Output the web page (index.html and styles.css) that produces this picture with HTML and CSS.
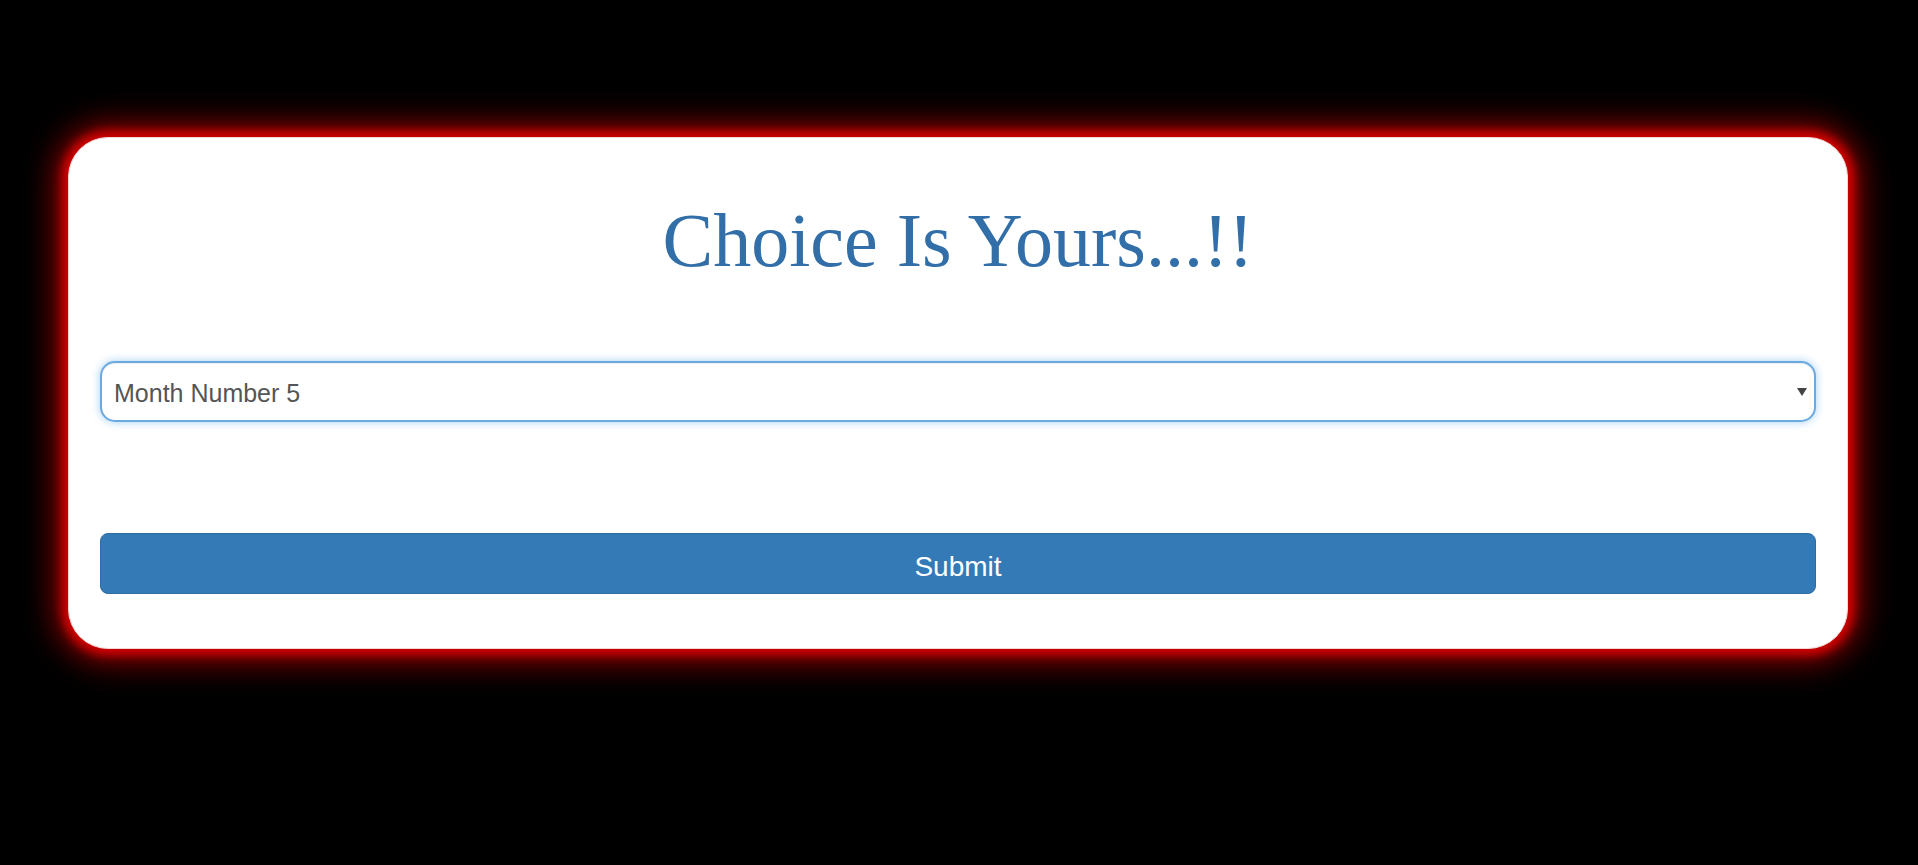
FILE: index.html
```html
<!DOCTYPE html>
<html lang="en">
<head>
<meta charset="utf-8">
<title>Choice Is Yours</title>
<link rel="stylesheet" href="styles.css">
</head>
<body>
<div class="card">
  <h1 class="title">Choice Is Yours...!!</h1>
  <div class="select-wrap">
    <select class="month-select">
      <option>Month Number 5</option>
    </select>
    <svg class="arrow" width="10" height="8" viewBox="0 0 10 8"><path d="M0 0 H10 L5 8 Z" fill="#444"/></svg>
  </div>
  <button class="submit-btn" type="button">Submit</button>
</div>
</body>
</html>
```
FILE: styles.css
```css
html, body {
  margin: 0;
  padding: 0;
  background: #000;
  height: 100%;
}
body {
  padding-top: 137px;
  box-sizing: border-box;
}
.card {
  box-sizing: border-box;
  width: 1780px;
  height: 512px;
  margin-left: 68px;
  padding: 61px 31px 0 31px;
  background: #fff;
  border: 1px solid #f2d4d4;
  border-radius: 40px;
  box-shadow: 0 0 10px 6px #d00000, 0 0 32px 12px rgba(200, 0, 0, 0.75);
  display: flex;
  flex-direction: column;
}
.title {
  margin: 0;
  font-family: "Liberation Serif", "Times New Roman", serif;
  font-weight: normal;
  font-size: 76px;
  line-height: 83px;
  color: #326fa8;
  text-align: center;
}
.select-wrap {
  position: relative;
  margin-top: 79px;
}
.month-select {
  display: block;
  width: 100%;
  height: 61px;
  box-sizing: border-box;
  -webkit-appearance: none;
  appearance: none;
  background: #fff;
  border: 2px solid #6aaae0;
  border-radius: 15px;
  box-shadow: inset 0 1px 1px rgba(0, 0, 0, 0.075), 0 0 8px rgba(102, 175, 233, 0.6);
  padding: 2px 40px 0 12px;
  font-family: "Liberation Sans", Arial, sans-serif;
  font-size: 25px;
  color: #555;
  outline: none;
}
.arrow {
  position: absolute;
  right: 9px;
  top: 27px;
}
.submit-btn {
  display: block;
  width: 100%;
  height: 61px;
  margin-top: 111px;
  box-sizing: border-box;
  padding: 6px 0 0 0;
  background: #337ab7;
  border: 1px solid #2e6da4;
  border-radius: 8px;
  color: #fff;
  font-family: "Liberation Sans", Arial, sans-serif;
  font-size: 28px;
  cursor: pointer;
}
```
